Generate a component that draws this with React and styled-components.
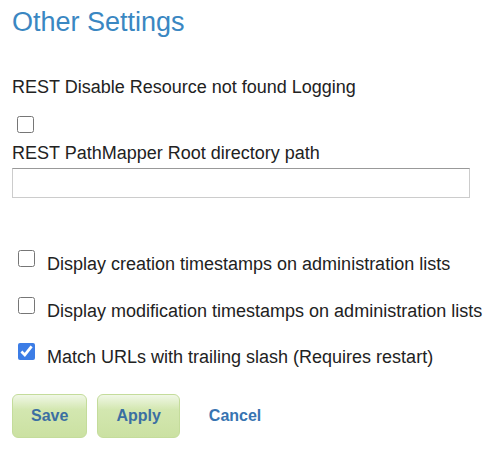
import React, { useState } from 'react';
import styled, { createGlobalStyle } from 'styled-components';

const GlobalStyle = createGlobalStyle`
  body {
    margin: 0;
    background: #fff;
    font-family: "Liberation Sans", Arial, sans-serif;
    color: #222;
  }
`;

const Page = styled.div`
  padding: 0 12px;
`;

const Title = styled.h2`
  margin: 6px 0 0;
  font-size: 27px;
  line-height: 32px;
  font-weight: normal;
  color: #3a87c2;
`;

const Field = styled.div`
  display: flex;
  flex-direction: column;
  align-items: flex-start;
`;

const Label = styled.label`
  display: block;
  font-size: 18px;
  line-height: 22px;
  margin-top: ${(p) => p.$top || 0}px;
`;

const Check = styled.input.attrs({ type: 'checkbox' })`
  width: 17px;
  height: 17px;
  margin: ${(p) => p.$margin || '0'};
  accent-color: #3c7de6;
  flex-shrink: 0;
`;

const TextInput = styled.input`
  box-sizing: border-box;
  width: 458px;
  height: 30px;
  margin-top: 4px;
  border: 1px solid #ccc;
  border-top-color: #999;
  font-size: 16px;
  font-family: inherit;
  padding: 2px 6px;
`;

const Options = styled.div`
  display: flex;
  flex-direction: column;
  gap: 21.5px;
  margin-top: 52px;
`;

const Row = styled.label`
  display: flex;
  align-items: flex-start;
  gap: 12px;
  padding-left: 6px;
  font-size: 18px;
  line-height: 22px;

  span {
    margin-top: 3px;
  }
`;

const Actions = styled.div`
  display: flex;
  gap: 10px;
  margin-top: 26px;
`;

const Button = styled.button`
  height: 44px;
  padding: 0 18px;
  font-family: inherit;
  font-size: 16px;
  font-weight: bold;
  color: ${(p) => (p.$link ? '#3774b1' : '#3b6fa2')};
  background: ${(p) =>
    p.$link
      ? 'transparent'
      : 'linear-gradient(to bottom, #f0f7e6 0%, #d3e7b0 35%, #cbe1a2 100%)'};
  border: 1px solid ${(p) => (p.$link ? 'transparent' : '#c4dc9b')};
  border-radius: 6px;
  cursor: pointer;
`;

export default function App() {
  const [notFound, setNotFound] = useState(false);
  const [path, setPath] = useState('');
  const [opts, setOpts] = useState({ created: false, modified: false, slash: true });

  const toggle = (key) => setOpts((o) => ({ ...o, [key]: !o[key] }));

  return (
    <Page>
      <GlobalStyle />
      <Title>Other Settings</Title>
      <Field>
        <Label $top={38}>REST Disable Resource not found Logging</Label>
        <Check
          $margin="18px 0 0 5px"
          checked={notFound}
          onChange={() => setNotFound(!notFound)}
        />
        <Label $top={9}>REST PathMapper Root directory path</Label>
        <TextInput value={path} onChange={(e) => setPath(e.target.value)} />
      </Field>
      <Options>
        <Row>
          <Check checked={opts.created} onChange={() => toggle('created')} />
          <span>Display creation timestamps on administration lists</span>
        </Row>
        <Row>
          <Check checked={opts.modified} onChange={() => toggle('modified')} />
          <span>Display modification timestamps on administration lists</span>
        </Row>
        <Row>
          <Check checked={opts.slash} onChange={() => toggle('slash')} />
          <span>Match URLs with trailing slash (Requires restart)</span>
        </Row>
      </Options>
      <Actions>
        <Button>Save</Button>
        <Button>Apply</Button>
        <Button $link>Cancel</Button>
      </Actions>
    </Page>
  );
}
